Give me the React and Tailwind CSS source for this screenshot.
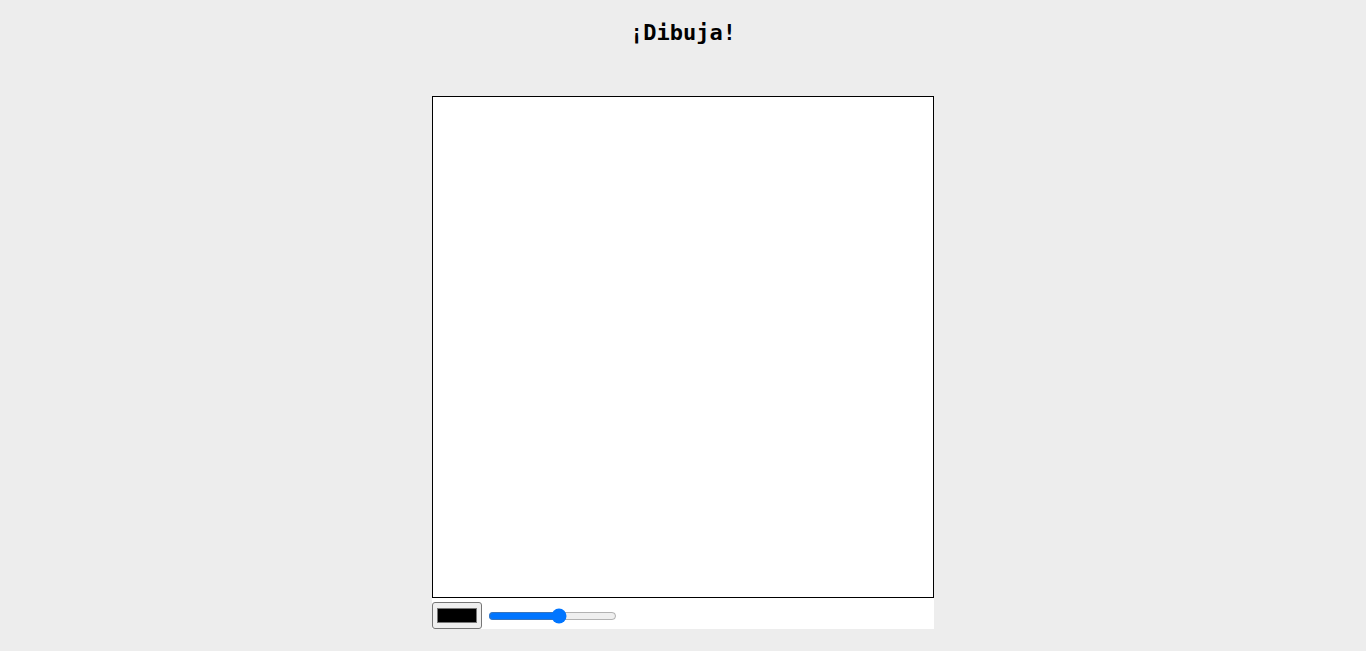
import React from "react";

export default function App() {
  return (
    <div className="min-h-[651px] w-full bg-[#ededed] flex flex-col items-center">
      <h2
        className="mt-[19px] text-[22px] leading-[28px] font-bold text-black"
        style={{ fontFamily: '"DejaVu Sans Mono", monospace' }}
      >
        ¡Dibuja!
      </h2>
      <div className="mt-[49px] w-[502px] bg-white flex flex-col">
        <div className="w-[502px] h-[502px] border border-black bg-white" />
        <div className="mt-[4px] flex items-center">
          <input
            type="color"
            defaultValue="#000000"
            className="block w-[50px] h-[27px] border border-[#767676] rounded-[3px] bg-[#efefef] px-[2px] py-[1px] cursor-pointer"
          />
          <input
            type="range"
            min="1"
            max="100"
            defaultValue="56"
            className="block ml-[6px] w-[129px] accent-[#0075ff]"
          />
        </div>
      </div>
    </div>
  );
}
